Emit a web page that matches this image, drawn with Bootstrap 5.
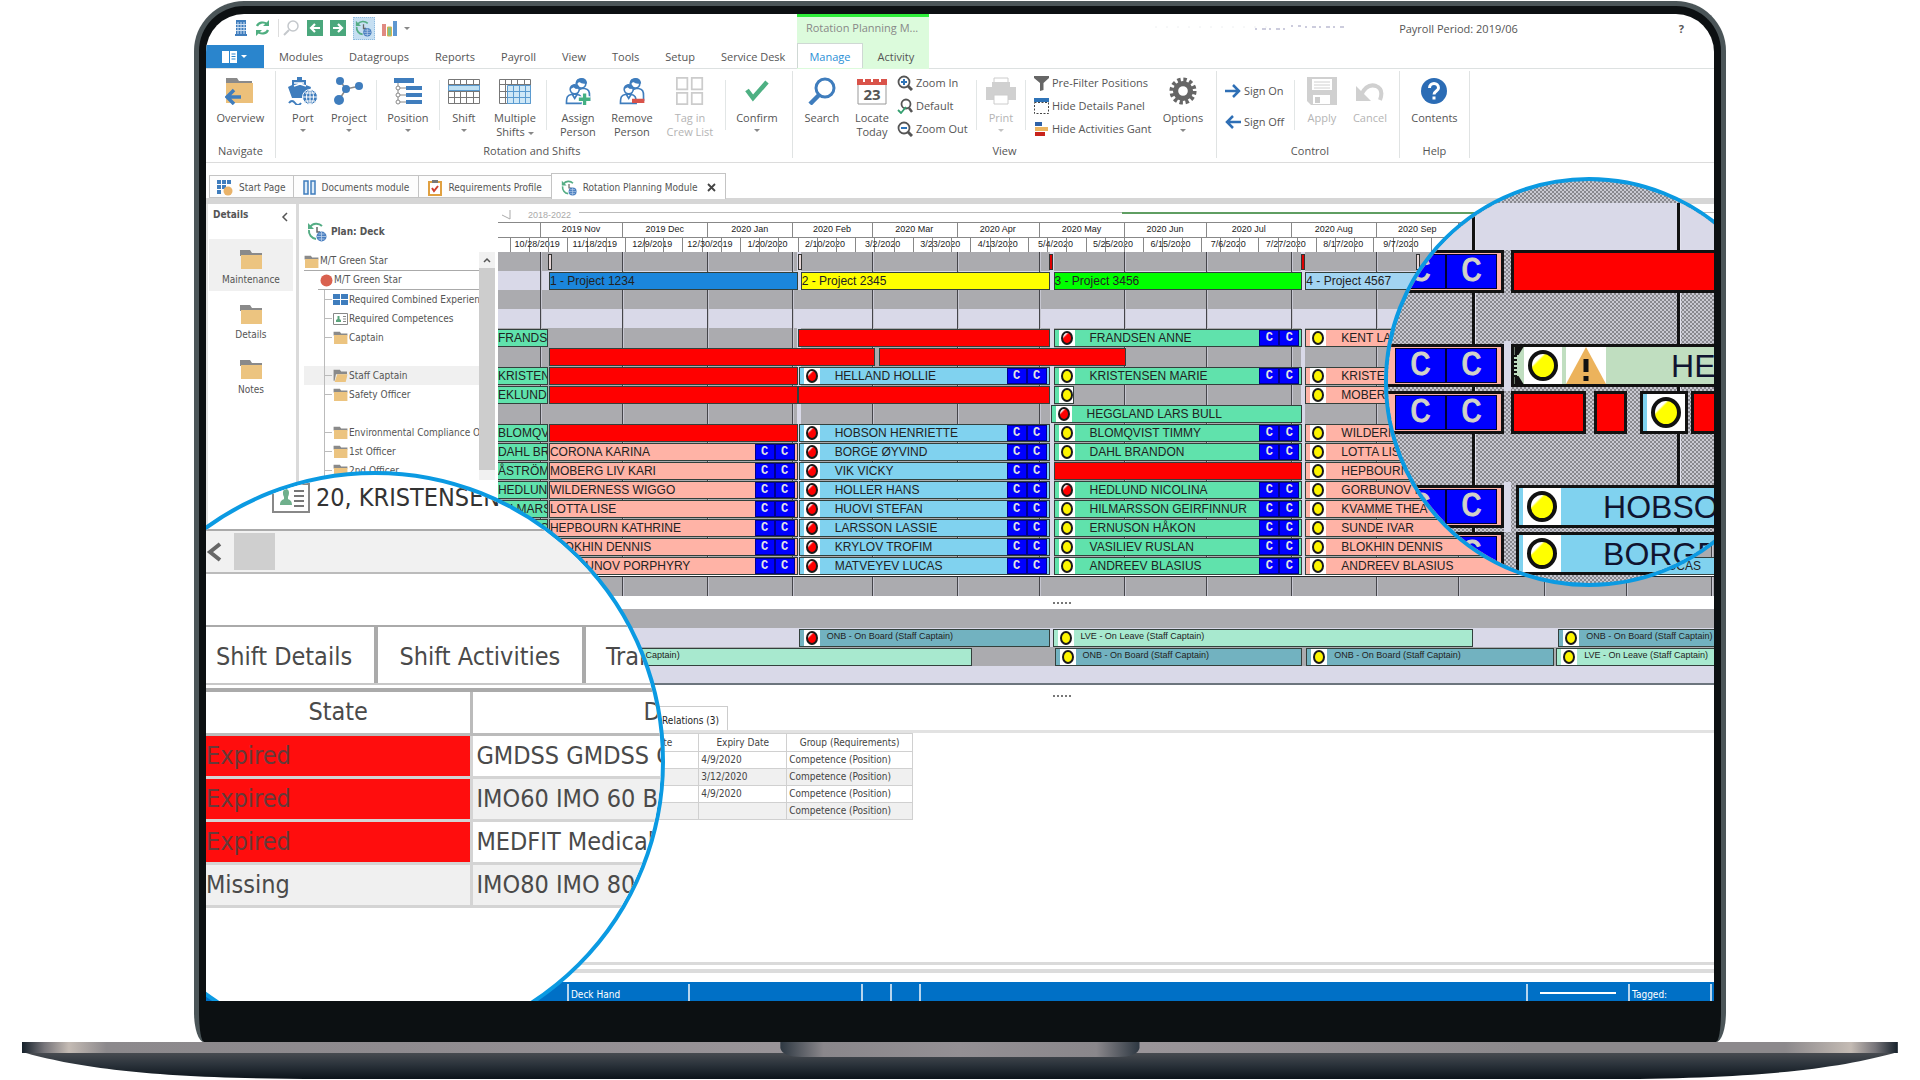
<!DOCTYPE html>
<html lang="en">
<head>
<meta charset="utf-8">
<meta name="viewport" content="width=device-width, initial-scale=1">
<title>Rotation Planning Module</title>
<link rel="stylesheet" href="https://cdn.jsdelivr.net/npm/bootstrap@5.3.0/dist/css/bootstrap.min.css">
<style>
:root{--ui:"Open Sans","Noto Sans",sans-serif;--dense:"DejaVu Sans Condensed","DejaVu Sans",sans-serif;--plot:"Liberation Sans",Arial,sans-serif;--rim:#0b9ae2;--ink:#555}
body{margin:0;background:#fff;color:var(--ink);font:11px/14px var(--ui);height:100vh;min-height:1080px;overflow-x:hidden}
button,a{font:inherit;color:inherit;text-decoration:none}
button{background:none;border:0;padding:0}
svg{display:block;flex:none}
/* laptop */
.lid{width:79.8%;margin:1px auto 0;border:5px solid #4b5558;border-bottom:0;border-radius:50px 50px 10px 10px/50px 50px 30px 30px;background:#0c1012;padding:8px 7px 0}
.chin{height:41px}
.screen{background:#fff;border-radius:38px 38px 0 0}
.deck-base{width:97.7%;height:38px}
/* header */
.quick{height:31px;padding:0 0 3px 29px;gap:7px}
.quick-on{width:22px;height:23px;background:#c6dff2;border:1px dotted #8ebbe0}
.head-left{width:591px}
.menu{height:23px}
.menu button{padding:0 13px;white-space:nowrap}
.menu .file-btn{flex:none;width:58px;height:23px;background:#2a85cd;color:#fff;margin-right:2px}
.menu .caret{border-top-color:#fff}
.ctx{width:132px;background:#dcfbdc;border-top:3px solid #2eee3a}
.ctx-title{height:26px;padding:4px 9px;color:#888;white-space:nowrap;overflow:hidden}
.ctx button{width:66px;height:25px;padding-top:2px;border:0}
.ctx .on{background:#fff;color:#2a90d6;border:1px solid #cfd8d4;border-bottom:0}
.head-line{border-bottom:1px solid #dde1e1}
/* ribbon */
.ribbon{height:94px;border-bottom:1px solid #dcdcdc;white-space:nowrap}
.grp{border-right:1px solid #e0e3e3;margin:2px 0 4px}
.grp-name{height:20px;padding-top:4px;text-align:center}
.grp-body{height:69px}
.rb{display:flex;flex-direction:column;align-items:center;padding-top:4px;line-height:14px}
.rb svg{margin:2px 0 6px;height:28px}
.rb-off{color:#b4b4b4}
.caret{width:0;border:3px solid transparent;border-top-color:#888;border-bottom:0;margin:4px auto 0}
.caret-in{display:inline-block;vertical-align:middle;margin:0 0 0 3px}
.vr-s{width:1px;background:#e2e6e6;margin:9px 4px 10px}
.mini{display:flex;align-items:center;gap:3px;height:23px}
.w40{width:40px}.w46{width:46px}.w50{width:50px}.w54{width:54px}.w58{width:58px}.w62{width:62px}
.w70{width:70px}.w75{width:75px}.w124{width:124px}.w65{width:65px}
/* document tabs */
.docs{height:25px;padding:10px 0 0 3px;border-bottom:6px solid #d6d6d6;box-sizing:content-box;font:10px/14px var(--dense)}
.docs button{display:flex;align-items:center;gap:6px;height:23px;margin-top:2px;border:1px solid #c4c4c4;margin-right:-1px;padding:2px 9px 0;white-space:nowrap;background:#fdfdfd}
.docs button:first-child{padding:2px 7px 0}
.docs .on{height:26px;margin-top:0;border-bottom:0;background:#fff}
/* workspace */
.dense{font:10px/14px var(--dense)}
.side{width:90px;border-left:2px solid #e4e4e4}
.side-head{height:35px;padding:4px 8px 0 5px}
.side button{display:flex;flex-direction:column;align-items:center;width:84px;height:52px;margin:0 0 3px 1px;padding-top:10px;gap:4px}
.side .on{background:#f0f0f0}
.tree-pane{width:202px;border-left:3px solid #dadada;padding-left:5px}
.plan-name{height:48px;padding:2px 0 0 3px}
.tree{width:175px;overflow:hidden;margin:0;padding:0;list-style:none;white-space:nowrap}
.tree li{height:19px;display:flex;align-items:center}
.tree a{display:flex;align-items:center;gap:1px}
.lv1{border-bottom:1px solid #aaa}
.lv2{margin-left:14px;border-bottom:1px solid #aaa;padding-left:2px}
.lv3{margin-left:20px;border-left:1px solid #bbb}
.lv3 a::before{content:"";width:7px;border-top:1px solid #bbb}
.lv3.picked{background:#f0f0f0;box-shadow:-20px 0 0 #f0f0f0}
.rail{width:16px;background:#f1f1f1}
.rail-btn{height:16px;background:#f1f1f1}
.rail-thumb{height:202px;background:#cdcdcd}
/* chart */
.chart{font:12px/16px var(--plot);color:#222;min-width:0}
.band-head{height:19px;border-bottom:1px solid #888;padding-top:3px}
.scale{position:relative;font-size:9px;line-height:12px;overflow:hidden;background:#fff}
.months{height:15px;border-bottom:1px solid #888}
.weeks{height:14px}
.scale span,.scale i{position:absolute;top:0;bottom:0}
.scale i{border-left:1px solid #888}
.scale span{transform:translateX(-50%);white-space:nowrap}
.plot{position:relative;overflow:hidden}
.lane{position:relative;height:19px;background:#ababaf}
.lane.lav{background:#d9d9e8}
.mline{position:absolute;top:0;bottom:0;width:2px;background:#45454a;border-right:1px solid #c6c6d0}
.split{position:absolute;top:0;bottom:0;width:4px;background:#d9d9e8}
.shift{position:absolute;top:1px;height:18px;border:1px solid #33403c;display:flex;align-items:center;overflow:hidden;white-space:nowrap;padding-right:2px}
.c-g{background:#60e2ac}.c-r{background:#f00}.c-s{background:#ffb3a6}.c-b{background:#80d2ef}
.c-p1{background:#1b86dc}.c-p2{background:#ff0}.c-p3{background:#0f0}.c-p4{background:#a2d4f2}
.c-onb{background:#72b2c0}.c-lve{background:#a8e9cf}
.lamp-box{width:16px;height:16px;background:#fff;margin-left:4px;flex:none;display:flex;justify-content:center;align-items:center}
.lamp{width:12px;height:14px;border:2px solid #1a1a1a;border-radius:50%}
.lamp-r{background:linear-gradient(135deg,#fff 20%,#f00 35%)}
.lamp-y{background:#fdf500}
.who{margin-left:15px}
.codes{margin-left:auto;display:flex;flex:none}
.codes b{width:20px;height:16px;background:#00f;color:#e4e4e4;border:1px solid #00008c;text-align:center;font:bold 12px/14px "Liberation Mono",monospace}
.flag{position:absolute;top:2px;height:16px;width:4px;border:1px solid #333;background:#e8d8d8}
.flag.hot{background:#d00}
.grip{height:13px;display:flex;justify-content:center;align-items:center;background:#fff}
.grip::before{content:"";width:18px;height:2px;background:repeating-linear-gradient(90deg,#777 0 2px,#fff 2px 4px);margin-right:88px}
.acts .shift{font-size:9px;line-height:10px}
.acts .who{margin-left:7px;margin-top:-4px}
.rel-tab{height:24px;width:230px;border:1px solid #ccc;border-left:0;border-bottom:0;text-align:right;padding:7px 8px 0 0}
.rel-line{height:3px;background:#e2e2e2}
.rel{width:415px;border-collapse:collapse;color:#444}
.rel td,.rel th{border:1px solid #d0d0d0;height:17px;padding:0 2px;font-weight:400;line-height:14px}
.rel th{text-align:center;height:18px}
.rel tr:nth-child(even) td{background:#f0f0f0}
/* bottom */
.floor{border-top:3px solid #dadada;border-bottom:4px solid #dcdcdc;height:11px;margin-bottom:9px}
.status{height:19px;background:#0070c6;color:#fff;padding-left:361px;line-height:22px}
.status span{border-left:2px solid #b6d5ee;padding-left:2px;margin-top:2px;height:17px;overflow:hidden}
.s120{width:121px}.s173{width:173px}.s29{width:29px}.s102{width:102px}.s82{width:82px}
/* magnifiers */
.lens{position:absolute;border:4px solid var(--rim);border-radius:50%;overflow:hidden;background:#fff}
.lens-l{width:580px;height:580px;left:-121px;top:457px;font:25px/34px var(--dense);color:#4a4a4a}
.lens-l .inner{padding-left:117px;white-space:nowrap}
.lens-top{height:54px;padding:0 0 8px 66px;color:#333;gap:6px}
.lens-scroll{height:45px;border-top:2px solid #aaa;border-bottom:2px solid #bbb;background:#f1f1f1;gap:12px;padding:2px 0}
.lens-thumb{width:41px;height:37px;background:#cfcfcf}
.lens-tabs{margin-top:51px;height:60px;border-top:2px solid #aaa;border-bottom:2px solid #c8c8c8}
.lens-tabs button{flex:none;border-right:4px solid #aaa;padding:4px 20px 0;text-align:left}
.lens-tabs button:first-child{padding-left:10px;width:172px}
.lens-tabs button:nth-child(2){width:208px}
.lens-tbl{border-collapse:collapse;width:460px;border-top:4px solid #aaa;margin-top:3px;table-layout:fixed}
.lens-tbl th,.lens-tbl td{border:3px solid #d4d4d4;border-left:0;padding:0 3px;height:43px;overflow:hidden;font-weight:400;line-height:34px}
.lens-tbl th{border-color:#bbb;text-align:center;height:44px}
.lens-tbl td:first-child{padding-left:0}
.lens-tbl .late{background:#ff0d0d;color:#663a3a}
.lens-tbl .alt{background:#f0f0f0}
.lens-r{width:410px;height:410px;right:-80px;top:163px;font:32px/40px var(--plot);color:#101430}
.mesh{background:repeating-conic-gradient(#88888e 0 25%,#c9c9d2 0 50%) 0 0/4px 4px}
.z{position:relative;height:47px}
.z.lav{background:#d9d9e8}
.z-line{position:absolute;top:22px;bottom:0;width:4px;background:#111;border-right:1px solid #e2e2ee}
.z-bar{position:absolute;top:0;height:43px;border:3px solid #111;display:flex;align-items:center;overflow:hidden;white-space:nowrap}
.z-codes b{width:51px;height:35px;background:#00f;border:1px solid #003;color:#d2d2c8;text-align:center;font:400 35px/34px "Liberation Mono",monospace;-webkit-text-stroke:1px #d2d2c8}
.z-codes{justify-content:flex-end;padding-right:4px}
.z-gap{position:absolute;top:-3px;height:50px;width:7px;background:#d9d9e8}
.z-lamp{width:38px;height:37px;background:#fff;flex:none;display:flex;justify-content:center;align-items:center}
.z-lamp::before{content:"";width:30px;height:31px;border:4px solid #111;border-radius:50%;background:linear-gradient(135deg,#fff 25%,#ff0 32%)}
</style>
<script src="https://cdn.jsdelivr.net/npm/bootstrap@5.3.0/dist/js/bootstrap.bundle.min.js"></script>
</head>
<body class="d-flex flex-column">
<svg width="0" height="0" class="position-absolute">
<defs>
<symbol id="folder" viewBox="0 0 22 20"><path fill="#8a8a8a" d="M0 1h10l2 3h10v3H0z"/><path fill="#ecc480" d="M1 6h21v14H1z"/></symbol>
<symbol id="folder-open" viewBox="0 0 22 20"><path fill="#8a8a8a" d="M0 1h10l2 3h9v4H4L2 18H0z"/><path fill="#ecc480" d="M6 8h16l-3 12H2z"/></symbol>
<symbol id="clockplan" viewBox="0 0 20 20"><path d="M3 5a8 8 0 0 1 12-1M2 8a8 8 0 0 0 7 9" fill="none" stroke="#55ad85" stroke-width="2"/><path fill="#55ad85" d="M1 1v6h6z"/><path d="M10 5v5h3" stroke="#666" stroke-width="1.5" fill="none"/><circle cx="14.5" cy="14.5" r="5" fill="#4a7fc0"/><path d="M10 14.500h9M14.500 10v9M11.500 12h6M11.500 17h6" stroke="#bcd2ec" stroke-width=".8"/></symbol>
<symbol id="people" viewBox="0 0 32 34"><g fill="#fff" stroke="#3f7dbd" stroke-width="2"><path d="M15 21c0-5 2-6 6-7h3c5 1 6 3 6 9v5H16z"/><circle cx="20" cy="8" r="5.500"/><path d="M14 7c1-6 11-7 12 0-4 1-7-1-8-2z" fill="#3f7dbd"/><path d="M2 32c0-8 1-10 7-11h5c6 1 7 3 7 11z"/><circle cx="12" cy="15" r="5.500"/><path d="M7 14c1-6 9-6 10 0-3 0-5 0-6-2z" fill="#3f7dbd" stroke-width="1"/><path d="M9 21l3 5 3-5" fill="none"/></g></symbol>
</defs>
</svg>

<main class="lid d-flex flex-column flex-fill">
<div class="screen position-relative overflow-hidden d-flex flex-column flex-fill">

<header class="d-flex">
 <div class="head-left flex-shrink-0 head-line">
  <div class="quick d-flex align-items-center">
   <svg width="12" height="16" viewBox="0 0 12 16"><path fill="#3f7dbd" d="M1 0h10v14h1v2H0v-2h1z"/><path stroke="#cfe0f2" d="M3 2v12M6 2v12M9 2v12M1 4.500h10M1 7.500h10M1 10.500h10" stroke-width="1"/></svg>
   <svg width="17" height="16" viewBox="0 0 17 16"><g fill="none" stroke="#4fae80" stroke-width="2.200"><path d="M3 6a6 5 0 0 1 10-2M14 10a6 5 0 0 1-10 2"/></g><path fill="#4fae80" d="M15 0v6H9zM2 16v-6h6z"/></svg>
   <svg width="22" height="18" viewBox="0 0 22 18"><path d="M.500 0v18" stroke="#ddd"/><circle cx="15" cy="7" r="5" fill="none" stroke="#c4c8cc" stroke-width="1.500"/><path d="M11 11l-5 5" stroke="#c4c8cc" stroke-width="2"/></svg>
   <svg width="16" height="16" viewBox="0 0 16 16"><rect width="16" height="16" fill="#4aa77c"/><path d="M13 8H4M8 4L4 8l4 4" fill="none" stroke="#fff" stroke-width="2.200"/></svg>
   <svg width="16" height="16" viewBox="0 0 16 16"><rect width="16" height="16" fill="#4aa77c"/><path d="M3 8h9M8 4l4 4-4 4" fill="none" stroke="#fff" stroke-width="2.200"/></svg>
   <span class="quick-on d-flex align-items-center justify-content-center"><svg width="17" height="17"><use href="#clockplan"/></svg></span>
   <svg width="15" height="17" viewBox="0 0 15 17"><path fill="#e08a82" d="M0 4h4v12H0z"/><path fill="#7fc08a" stroke="#d8b34e" d="M5.500 7h4v9h-4z"/><path fill="#5f97d0" d="M11 1h4v15h-4z"/></svg>
   <i class="caret m-0"></i>
  </div>
  <nav class="menu d-flex align-items-stretch">
   <button class="file-btn d-flex align-items-center justify-content-center gap-1" aria-label="File"><svg width="15" height="12" viewBox="0 0 15 12"><path fill="#fff" d="M0 0h7v12H0zM8 0h7v12H8z"/><path stroke="#2a85cd" d="M9.500 3h4M9.500 5.500h4M9.500 8h4"/></svg><i class="caret m-0"></i></button>
   <button>Modules</button><button>Datagroups</button><button>Reports</button><button>Payroll</button><button>View</button><button>Tools</button><button>Setup</button><button>Service Desk</button>
  </nav>
 </div>
 <div class="ctx flex-shrink-0">
  <div class="ctx-title">Rotation Planning M...</div>
  <div class="d-flex"><button class="on">Manage</button><button>Activity</button></div>
 </div>
 <div class="flex-fill head-line d-flex justify-content-end align-items-start pt-2">
  <svg class="me-4" width="230" height="10" viewBox="0 0 230 10"><path d="M10 5h120" stroke="#eef0f2" stroke-dasharray="2 9"/><path d="M110 7h30M146 4h10M160 5h40" stroke="#ccd" stroke-width="2" stroke-dasharray="2 5 4 3"/></svg>
  <span style="margin-right:161px">Payroll Period: 2019/06</span>
  <button class="fw-bold" style="margin-right:30px">?</button>
 </div>
</header>

<section class="ribbon d-flex">
 <div class="grp w70"><div class="grp-body d-flex">
  <button class="rb w70"><svg width="30" height="28" viewBox="0 0 30 28"><path fill="#8a8a8a" d="M1 1h11l2 3h13v4H1z"/><path fill="#ecc07a" d="M1 6h27v20H1z"/><path d="M16 20H2M9 13l-7 7 7 7" fill="none" stroke="#3f7dbd" stroke-width="3.500"/></svg>Overview</button>
 </div><div class="grp-name">Navigate</div></div>

 <div class="grp ps-1 pe-2"><div class="grp-body d-flex">
  <button class="rb w46"><svg width="30" height="28" viewBox="0 0 30 28"><path fill="#3f7dbd" d="M9 0h5v3h4v5l5 2-3 11H4L0 10l4-2V3h5z"/><path d="M6 6h10M6 9l6-2 6 2" stroke="#fff" fill="none" stroke-width="1.500"/><path d="M1 26q3-4 6 0t6 0" fill="none" stroke="#3f7dbd" stroke-width="2"/><circle cx="22" cy="20" r="7.500" fill="#3f7dbd" stroke="#fff"/><path d="M15 20h14M22 13v14M17 16h10M17 24h10" stroke="#fff"/><ellipse cx="22" cy="20" rx="3.500" ry="7" fill="none" stroke="#fff"/></svg>Port<i class="caret"></i></button>
  <button class="rb w46"><svg width="30" height="28" viewBox="0 0 30 28"><path d="M6 4l6 8 14-3M12 12L5 23" stroke="#888" stroke-width="1.500" fill="none"/><g fill="#3f7dbd"><circle cx="6" cy="4" r="4"/><circle cx="12" cy="12" r="4"/><circle cx="25" cy="9" r="4"/><circle cx="5" cy="23" r="5"/></g></svg>Project<i class="caret"></i></button>
  <i class="vr-s"></i>
  <button class="rb w54"><svg width="28" height="28" viewBox="0 0 28 28"><g fill="#3f7dbd"><path d="M0 1h20v5H0zM12 9h16v4H12zM12 16h16v4H12zM12 23h16v4H12z"/></g><path d="M4 6v19M4 11h8M4 18h8M4 25h8" stroke="#888" fill="none"/><g fill="#fff" stroke="#888"><circle cx="4" cy="11" r="2"/><circle cx="4" cy="18" r="2"/><circle cx="4" cy="25" r="2"/></g></svg>Position<i class="caret"></i></button>
  <i class="vr-s"></i>
  <button class="rb w40"><svg width="32" height="28" viewBox="0 0 32 28"><path fill="#fff" stroke="#777" d="M.500 2.500h31v24H.500zM.500 7.500h31M.500 14.500h31M.500 20.500h31M6.500 2v24M12.500 2v24M18.500 2v24M25.500 2v24"/><path fill="#bfe0f3" stroke="#5b9bd0" d="M.500 8.500h31v5H.500z"/></svg>Shift<i class="caret"></i></button>
  <button class="rb w62"><svg width="32" height="28" viewBox="0 0 32 28"><path fill="#fff" stroke="#777" d="M.500 2.500h31v24H.500zM.500 7.500h31M.500 14.500h31M.500 20.500h31M6.500 2v24M12.500 2v24M18.500 2v24M25.500 2v24"/><path fill="#cfe8f7" stroke="#5b9bd0" d="M8.500 8.500h23v18h-23zM8 14.500h23M8 20.500h23M14.500 8v18M20.500 8v18M26.500 8v18"/></svg>Multiple<br><span>Shifts<i class="caret caret-in"></i></span></button>
  <i class="vr-s ms-0"></i>
  <button class="rb w54"><svg width="32" height="28" viewBox="0 0 32 34"><use href="#people" width="32" height="34"/><path d="M24 20v14M17 27h14" stroke="#fff" stroke-width="7"/><path d="M24 20v14M17 27h14" stroke="#44b083" stroke-width="4"/></svg>Assign<br>Person</button>
  <button class="rb w54"><svg width="32" height="28" viewBox="0 0 32 34"><use href="#people" width="32" height="34"/><path d="M16 29h15" stroke="#d9534a" stroke-width="5"/></svg>Remove<br>Person</button>
  <button class="rb rb-off w62" disabled><svg width="32" height="28" viewBox="0 0 32 32"><path fill="#fff" stroke="#ccc" stroke-width="2" d="M1 1h12v13H1zM18 1h12v13H18zM1 18h12v13H1zM18 18h12v13H18z"/></svg>Tag in<br>Crew List</button>
  <i class="vr-s"></i>
  <button class="rb w54"><svg width="26" height="28" viewBox="0 0 26 28"><path d="M3 13l6 8L23 5" fill="none" stroke="#4eb083" stroke-width="4.500"/></svg>Confirm<i class="caret"></i></button>
 </div><div class="grp-name">Rotation and Shifts</div></div>

 <div class="grp px-1"><div class="grp-body d-flex">
  <button class="rb w50"><svg width="28" height="28" viewBox="0 0 28 28"><circle cx="17" cy="11" r="9" fill="none" stroke="#3f7dbd" stroke-width="3"/><path d="M11 18l-9 9" stroke="#3f7dbd" stroke-width="4.500"/></svg>Search</button>
  <button class="rb w50"><svg width="30" height="28" viewBox="0 0 30 28"><path fill="#fff" stroke="#999" d="M1 4h28v23H1z"/><path fill="#d9534a" d="M0 2h30v6H0z"/><path d="M7 0v5M15 0v5M23 0v5" stroke="#fff" stroke-width="2"/><text x="15" y="23" font-size="15" font-weight="700" text-anchor="middle" fill="#555">23</text></svg>Locate<br>Today</button>
  <div class="w75">
   <button class="mini"><svg width="16" height="16" viewBox="0 0 16 16"><circle cx="7" cy="7" r="5.500" fill="#fff" stroke="#555" stroke-width="1.800"/><path d="M11 11l4 4" stroke="#555" stroke-width="3"/><path d="M4 7h6M7 4v6" stroke="#2f74b8" stroke-width="2"/></svg>Zoom In</button>
   <button class="mini"><svg width="16" height="16" viewBox="0 0 16 16"><circle cx="9" cy="6" r="4.500" fill="#fff" stroke="#555" stroke-width="1.800"/><path d="M12 10l3 4" stroke="#555" stroke-width="2.500"/><path d="M1 12l3 3 5-6" fill="none" stroke="#35a070" stroke-width="1.800"/></svg>Default</button>
   <button class="mini"><svg width="16" height="16" viewBox="0 0 16 16"><circle cx="7" cy="7" r="5.500" fill="#fff" stroke="#555" stroke-width="1.800"/><path d="M11 11l4 4" stroke="#555" stroke-width="3"/><path d="M4 7h6" stroke="#2f74b8" stroke-width="2"/></svg>Zoom Out</button>
  </div>
  <i class="vr-s"></i>
  <button class="rb rb-off w40" disabled><svg width="30" height="28" viewBox="0 0 30 28"><path fill="#fff" stroke="#ccc" d="M8 1h14v10H8z"/><path fill="#d0d0d0" d="M0 10h30v13H0zM6 5h18v8H6z"/><path fill="#fff" stroke="#ccc" d="M8 18h14v9H8z"/></svg>Print<i class="caret opacity-50"></i></button>
  <i class="vr-s"></i>
  <div class="w124 ps-1">
   <button class="mini"><svg width="15" height="16" viewBox="0 0 15 16"><path fill="#666" d="M0 1h15v2L9.500 8v7L6 16V8L0 3z"/></svg>Pre-Filter Positions</button>
   <button class="mini"><svg width="15" height="16" viewBox="0 0 15 16"><path fill="#2f74b8" d="M0 0h15v4H0z"/><path fill="none" stroke="#444" stroke-dasharray="2 1.500" d="M.500 4.500h14v11H.500z"/></svg>Hide Details Panel</button>
   <button class="mini"><svg width="15" height="16" viewBox="0 0 15 16"><path fill="#2f62a8" d="M1 1h7v4H1z"/><path fill="#ecb560" d="M1 6h13v4H1z"/><path fill="#c8231c" d="M1 11h10v4H1z"/></svg>Hide Activities Gant</button>
  </div>
  <button class="rb w58"><svg width="30" height="28" viewBox="-16 -16 32 32"><circle r="8.500" fill="none" stroke="#666" stroke-width="6"/><circle r="13" fill="none" stroke="#666" stroke-width="5" stroke-dasharray="3.800 3.007"/></svg>Options<i class="caret"></i></button>
 </div><div class="grp-name">View</div></div>

 <div class="grp ps-2 pe-1"><div class="grp-body d-flex">
  <div class="w65 pt-2">
   <button class="mini mb-2"><svg width="16" height="14" viewBox="0 0 16 14"><path d="M0 7h14M8 1l6 6-6 6" fill="none" stroke="#2f6fb5" stroke-width="2.500"/></svg>Sign On</button>
   <button class="mini"><svg width="16" height="14" viewBox="0 0 16 14"><path d="M16 7H2M8 1L2 7l6 6" fill="none" stroke="#2f6fb5" stroke-width="2.500"/></svg>Sign Off</button>
  </div>
  <i class="vr-s"></i>
  <button class="rb rb-off w46" disabled><svg width="30" height="28" viewBox="0 0 30 28"><path fill="#d0d0d0" d="M0 0h30v28H4l-4-4z"/><path fill="#fff" d="M5 2h20v11H5zM6 18h17v9H6z"/><path stroke="#d0d0d0" d="M7 5h16M7 8h16M7 11h16"/><path fill="#ccc" d="M8 20h5v6H8z"/></svg>Apply</button>
  <button class="rb rb-off w50" disabled><svg width="30" height="28" viewBox="0 0 30 28"><path fill="#d0d0d0" d="M1 9v15h15z"/><path d="M6 18c4-8 9-11 15-9 5 2 7 6 4 14" fill="none" stroke="#d0d0d0" stroke-width="4"/></svg>Cancel</button>
 </div><div class="grp-name">Control</div></div>

 <div class="grp w70"><div class="grp-body d-flex">
  <button class="rb w70"><svg width="28" height="28" viewBox="0 0 28 28"><circle cx="14" cy="14" r="13" fill="#2b6cb5"/><path d="M9.500 11c0-6 9-6 9 0 0 3-4.500 3-4.500 6.500M14 19.500v3" fill="none" stroke="#fff" stroke-width="3"/></svg>Contents</button>
 </div><div class="grp-name">Help</div></div>
</section>

<nav class="docs d-flex align-items-start">
 <button><svg width="16" height="16" viewBox="0 0 16 16"><path fill="#3f7dbd" d="M0 0h4v4H0zM5 0h4v4H5zM10 0h4v4h-4zM0 5h4v4H0zM5 5h4v4H5zM0 10h4v4H0z"/><circle cx="11" cy="11" r="4.500" fill="#e9b36a"/></svg>Start Page</button>
 <button><svg width="13" height="15" viewBox="0 0 13 15"><path fill="#dcebf8" stroke="#3f7dbd" stroke-width="1.500" d="M1 1h4v13H1zM8 1h4v13H8z"/></svg>Documents module</button>
 <button><svg width="14" height="16" viewBox="0 0 14 16"><path fill="#fff" stroke="#e0a040" stroke-width="2" d="M1 2h12v13H1z"/><path fill="#777" d="M4 0h6v3H4z"/><path d="M4 8l2 3 4-5" fill="none" stroke="#d04030" stroke-width="2"/></svg>Requirements Profile</button>
 <button class="on"><svg width="16" height="16"><use href="#clockplan"/></svg>Rotation Planning Module<svg class="ms-1" width="9" height="9" viewBox="0 0 9 9"><path d="M1 1l7 7M8 1L1 8" stroke="#444" stroke-width="1.800"/></svg></button>
</nav>

<div class="d-flex flex-fill" style="min-height:0">
 <aside class="side dense flex-shrink-0">
  <div class="side-head d-flex justify-content-between"><b>Details</b><svg width="7" height="10" viewBox="0 0 7 10" class="mt-1"><path d="M6 1L2 5l4 4" fill="none" stroke="#555" stroke-width="1.500"/></svg></div>
  <button class="on"><svg width="22" height="20"><use href="#folder"/></svg>Maintenance</button>
  <button><svg width="22" height="20"><use href="#folder"/></svg>Details</button>
  <button><svg width="22" height="20"><use href="#folder"/></svg>Notes</button>
 </aside>

 <section class="tree-pane dense flex-shrink-0">
  <div class="plan-name d-flex align-items-center gap-1 pt-3"><svg width="20" height="20" class="mb-2"><use href="#clockplan"/></svg><b class="mb-2">Plan: Deck</b></div>
  <div class="d-flex">
   <ul class="tree" id="tree"></ul>
   <div class="rail"><div class="rail-btn d-flex justify-content-center align-items-center"><svg width="8" height="6" viewBox="0 0 8 6"><path d="M1 5l3-3 3 3" fill="none" stroke="#555" stroke-width="1.500"/></svg></div><div class="rail-thumb"></div></div>
  </div>
 </section>

 <section class="chart flex-fill">
  <div class="band-head d-flex align-items-center gap-2 ps-1"><svg width="10" height="10" viewBox="0 0 10 10"><path d="M0 5l8 4V0" fill="none" stroke="#aaa"/></svg><span class="ms-2" style="color:#aaa;font-size:9px">2018-2022</span><div class="flex-fill d-flex mb-1"><div style="flex:542;border-top:1px solid #bbb"></div><div style="flex:355;border-top:2px solid #5f9e62"></div><div style="flex:236;border-top:1px solid #bbb"></div></div></div>
  <div class="scale months" id="months"></div>
  <div class="scale weeks" id="weeks"></div>
  <div class="plot" id="plot"></div>
  <div class="grip"></div>
  <div class="plot acts" id="acts"></div>
  <div class="grip mt-1"></div>
  <div class="dense mt-1">
   <div class="rel-tab">Relations (3)</div>
   <div class="rel-line"></div>
   <table class="rel">
    <colgroup><col style="width:201px"><col style="width:88px"><col style="width:126px"></colgroup>
    <thead><tr><th class="text-end" style="padding-right:26px">Issue Date</th><th>Expiry Date</th><th>Group (Requirements)</th></tr></thead>
    <tbody>
     <tr><td></td><td>4/9/2020</td><td>Competence (Position)</td></tr>
     <tr><td></td><td>3/12/2020</td><td>Competence (Position)</td></tr>
     <tr><td></td><td>4/9/2020</td><td>Competence (Position)</td></tr>
     <tr><td></td><td></td><td>Competence (Position)</td></tr>
    </tbody>
   </table>
  </div>
 </section>
</div>

<div class="floor"></div>
<footer class="status dense d-flex">
 <span class="s120">Deck Hand</span><span class="s173"></span><span class="s29"></span><span class="s29"></span><span class="flex-fill"></span><span class="s102 pt-2 px-2"><i class="d-block mx-1 border-top border-2 border-white"></i></span><span class="s82">Tagged:</span><span></span>
</footer>

<div class="lens lens-l">
 <div class="inner">
  <div class="lens-top d-flex align-items-center"><svg width="38" height="30" viewBox="0 0 38 30"><path fill="#fff" stroke="#888" stroke-width="2" d="M1 1h36v28H1z"/><path fill="#6fb08c" d="M8 22c0-4 2-5 4-6v-2c-2-4-1-8 2-8s4 4 2 8v2c2 1 4 2 4 6z"/><path stroke="#777" stroke-width="2" d="M22 8h10M22 13h10M22 18h10M22 23h10"/></svg><span>20, KRISTENSEN MARIE</span></div>
  <div class="lens-scroll d-flex align-items-center"><svg width="16" height="20" viewBox="0 0 16 20"><path d="M14 2L4 10l10 8" fill="none" stroke="#666" stroke-width="4"/></svg><div class="lens-thumb"></div></div>
  <div class="lens-tabs d-flex"><button>Shift Details</button><button class="px-2 text-center">Shift Activities</button><button class="border-0">Training</button></div>
  <table class="lens-tbl">
   <colgroup><col style="width:266px"><col></colgroup>
   <thead><tr><th>State</th><th style="text-align:left;padding-left:170px">Description</th></tr></thead>
   <tbody>
    <tr><td class="late">Expired</td><td>GMDSS GMDSS Certificate</td></tr>
    <tr><td class="late">Expired</td><td class="alt">IMO60 IMO 60 Basic</td></tr>
    <tr><td class="late">Expired</td><td>MEDFIT Medical Fitness</td></tr>
    <tr><td class="alt">Missing</td><td class="alt">IMO80 IMO 80 Security</td></tr>
   </tbody>
  </table>
 </div>
</div>
<div class="lens lens-r mesh" id="zoomed"></div>

</div>
<div class="chin flex-shrink-0"></div>
</main>

<svg class="deck-base mx-auto" viewBox="0 0 1875 38" preserveAspectRatio="none">
 <defs>
  <linearGradient id="under" x2="0" y2="1"><stop offset="0" stop-color="#4a4d52"/><stop offset=".45" stop-color="#2c343c"/><stop offset="1" stop-color="#0c131a"/></linearGradient>
  <linearGradient id="edge"><stop offset="0" stop-color="#15202a"/><stop offset=".012" stop-color="#77757a"/><stop offset=".025" stop-color="#c4bbb4"/><stop offset=".045" stop-color="#8c898c"/><stop offset=".2" stop-color="#8f8b8f"/><stop offset=".42" stop-color="#9a9599"/><stop offset=".6" stop-color="#9a9599"/><stop offset=".8" stop-color="#8c898c"/><stop offset=".94" stop-color="#8c898c"/><stop offset=".975" stop-color="#c4bbb4"/><stop offset=".988" stop-color="#77757a"/><stop offset="1" stop-color="#15202a"/></linearGradient>
  <linearGradient id="notch"><stop offset="0" stop-color="#2e3842"/><stop offset=".12" stop-color="#8a878b"/><stop offset=".5" stop-color="#949094"/><stop offset=".88" stop-color="#8a878b"/><stop offset="1" stop-color="#2e3842"/></linearGradient>
 </defs>
 <path fill="url(#under)" d="M0 10C60 27 140 37 300 37h1275c160 0 240-10 300-27z"/>
 <path fill="url(#edge)" d="M0 0h1875v11H0z"/>
 <path fill="url(#notch)" d="M758 0h359v6q-2 9-22 9H780q-20 0-22-9z"/>
</svg>

<script>
// Chart positions are counted in units of 1/1217 of the visible period.
const SPAN = 1217, DAY = 2.744, NOV1 = 42;
const pct = u => (u / SPAN * 100).toFixed(3) + '%';

const tree = [['lv1','folder','M/T Green Star'],['lv2','dot','M/T Green Star'],['lv3','grid','Required Combined Experience'],['lv3','id','Required Competences'],['lv3','folder','Captain'],['lv3',''],['lv3 picked','folder-open','Staff Captain'],['lv3','folder','Safety Officer'],['lv3',''],['lv3','folder','Environmental Compliance Officer'],['lv3','folder','1st Officer'],['lv3','folder','2nd Officer']];
const art = {
 dot:'<svg width="13" height="13" viewBox="0 0 13 13"><circle cx="6.500" cy="6.500" r="6" fill="#d9614f"/></svg>',
 grid:'<svg width="15" height="11" viewBox="0 0 15 11"><path fill="#3f7dbd" d="M0 0h7v5H0zM8 0h7v5H8zM0 6h7v5H0zM8 6h7v5H8z"/></svg>',
 id:'<svg width="15" height="12" viewBox="0 0 15 12"><path fill="#fff" stroke="#888" d="M.500.500h14v11H.500z"/><path fill="#5aa57c" d="M3 9h5V7L6.500 6V3h-2v3L3 7z"/><path stroke="#888" d="M10 3.500h3M10 6h3M10 8.500h3"/></svg>'
};
document.getElementById('tree').innerHTML = tree.map(([c,i,t]) => `<li class="${c}">${t ? `<a href="#">${art[i] || `<svg width="15" height="13" viewBox="0 0 22 20"><use href="#${i}"/></svg>`}${t}</a>` : ''}</li>`).join('');

const months = [['2019 Nov',30],['2019 Dec',31],['2020 Jan',31],['2020 Feb',29],['2020 Mar',31],['2020 Apr',30],['2020 May',31],['2020 Jun',30],['2020 Jul',31],['2020 Aug',31],['2020 Sep',30],['2020 Oct',31],['2020 Nov',30],['2020 Dec',31],['2021 Jan',31]];
let at = NOV1, lines = '', head = '';
for (const [name, days] of months) {
 head += `<i style="left:${pct(at)}"></i>` + (at < 900 ? `<span style="left:${pct(at + days * DAY / 2)}">${name}</span>` : '');
 lines += `<div class="mline" style="left:${pct(at)}"></div>`;
 at += days * DAY;
}
document.getElementById('months').innerHTML = head;

let weeks = '', day = new Date(Date.UTC(2019, 9, 28));
for (let x = NOV1 - 4 * DAY - 7 * DAY, n = -1; x < SPAN; x += 7 * DAY, n++) {
 weeks += `<i style="left:${pct(x)}"></i>`;
 if (n >= 0 && n % 3 === 0 && x < 920) {
  weeks += `<span style="left:${pct(x + 3 * DAY)}">${day.getUTCMonth() + 1}/${day.getUTCDate()}/${day.getUTCFullYear()}</span>`;
  day.setUTCDate(day.getUTCDate() + 21);
 }
}
document.getElementById('weeks').innerHTML = weeks;

const codes = '<span class="codes"><b>C</b><b>C</b></span>';
function shift(kind, a, b, text = '', lamp = '', coded = false) {
 const light = lamp ? `<span class="lamp-box"><span class="lamp lamp-${lamp}"></span></span>` : '';
 return `<div class="shift c-${kind}" style="left:${pct(a)};width:${pct(b - a)}">${light}${text ? `<span class="${lamp ? 'who' : ''}">${text}</span>` : ''}${coded ? codes : ''}</div>`;
}
const A = t => shift('g', -1, 50, t), B = t => shift('s', 51, 300, t, '', true), BR = shift('r', 51, 300);
const C = t => shift('b', 301, 552, t, 'r', true), D = (t, l = 'y') => shift('g', 556, 805, t, l, true);
const E = t => shift('s', 808, 1057, t, 'y'), F = t => shift('b', 1060, 1230, t, 'y');
const flag = (u, hot) => `<div class="flag ${hot ? 'hot' : ''}" style="left:${pct(u)}"></div>`;
const splits = [299, 552, 804, 1056].map(u => `<div class="split" style="left:${pct(u)}"></div>`).join('');
const lanes = [
 ['', flag(50) + flag(300) + flag(551, 1) + flag(804, 1) + flag(919)],
 ['lav', shift('p1', 51, 300, '1 - Project 1234') + shift('p2', 303, 552, '2 - Project 2345') + shift('p3', 556, 805, '3 - Project 3456') + shift('p4', 808, 1057, '4 - Project 4567')],
 ['', ''], ['lav', ''],
 ['', A('FRANDSEN') + shift('r', 300, 552) + D('FRANDSEN ANNE', 'r') + E('KENT LARS')],
 ['', shift('r', 51, 377) + shift('r', 381, 629)],
 ['', A('KRISTENSEN') + BR + C('HELLAND HOLLIE') + D('KRISTENSEN MARIE') + E('KRISTENSEN MARIE')],
 ['', A('EKLUND') + BR + shift('r', 300, 552) + shift('g', 556, 576, '', 'y') + E('MOBERG LIV')],
 ['', shift('g', 553, 805, 'HEGGLAND LARS BULL', 'r')],
 ['', A('BLOMQVIST') + BR + C('HOBSON HENRIETTE') + D('BLOMQVIST TIMMY') + E('WILDERNESS WIGGO')],
 ['', A('DAHL BRANDON') + B('CORONA KARINA') + C('BORGE ØYVIND') + D('DAHL BRANDON') + E('LOTTA LISE')],
 ['', A('ÅSTRÖM') + B('MOBERG LIV KARI') + C('VIK VICKY') + shift('r', 556, 805) + E('HEPBOURN KATHRINE')],
 ['', A('HEDLUND') + B('WILDERNESS WIGGO') + C('HOLLER HANS') + D('HEDLUND NICOLINA', 'r') + E('GORBUNOV PORPHYRY')],
 ['', A('HILMARSSON') + B('LOTTA LISE') + C('HUOVI STEFAN') + D('HILMARSSON GEIRFINNUR') + E('KVAMME THEA')],
 ['', A('ERNUSON') + B('HEPBOURN KATHRINE') + C('LARSSON LASSIE') + D('ERNUSON HÅKON') + E('SUNDE IVAR')],
 ['', A('VASILIEV') + B('BLOKHIN DENNIS') + C('KRYLOV TROFIM') + D('VASILIEV RUSLAN') + E('BLOKHIN DENNIS')],
 ['', A('ANDREEV') + B('GORBUNOV PORPHYRY') + C('MATVEYEV LUCAS') + D('ANDREEV BLASIUS') + E('ANDREEV BLASIUS') + F('MATVEYEV LUCAS')]
];
document.getElementById('plot').innerHTML = lanes.map(([c, h]) => `<div class="lane ${c}">${lines}${c || !h ? '' : splits}${h}</div>`).join('') +
 `<div class="border-top border-dark border-1" style="margin-top:1px"></div><div class="lane">${lines}</div>`;

document.getElementById('acts').innerHTML =
 '<div class="lane"></div>' +
 '<div class="lane lav">' + shift('onb', 301, 552, 'ONB - On Board (Staff Captain)', 'r') + shift('lve', 555, 976, 'LVE - On Leave (Staff Captain)', 'y') + shift('onb', 1061, 1240, 'ONB - On Board (Staff Captain)', 'y') + '</div>' +
 '<div class="lane">' + shift('lve', 30, 474, 'LVE - On Leave (Staff Captain)', 'y') + shift('onb', 557, 805, 'ONB - On Board (Staff Captain)', 'y') + shift('onb', 809, 1057, 'ONB - On Board (Staff Captain)', 'y') + shift('lve', 1059, 1240, 'LVE - On Leave (Staff Captain)', 'y') + '</div>' +
 '<div class="lane lav border-bottom border-2 border-secondary"></div>';

// Magnified part of the chart, in pixels of the lens.
const zb = (a, b, color, inner = '', cls = '') => `<div class="z-bar ${cls}" style="left:${a}px;width:${b - a}px;background:${color}">${inner}</div>`;
const zc = zb(-10, 116, '#ffb3a6', '<b>C</b><b>C</b>', 'z-codes'), gap = '<div class="z-gap" style="left:116px"></div>', lampZ = '<span class="z-lamp"></span>';
const warn = '<span class="bg-white ms-1"><svg width="40" height="37" viewBox="0 0 40 37"><path fill="#ecb35c" d="M20 0l20 37H0z"/><path stroke="#111" stroke-width="5" d="M20 12v13M20 29v5"/></svg></span>';
const handle = '<svg width="10" height="37" viewBox="0 0 9 37"><path fill="#111" d="M0 0h9L4 8H0zM0 37h9l-5-8H0z"/><path d="M1 8v22" stroke="#111" stroke-width="3" stroke-dasharray="2 2"/></svg>';
document.getElementById('zoomed').innerHTML =
 '<div style="height:22px"></div><div class="z lav"></div>' +
 '<div class="z-line" style="left:84px"></div><div class="z-line" style="left:289px"></div>' +
 `<div class="z">${zc}${zb(123, 420, '#f00')}</div><div class="z"></div>` +
 `<div class="z">${gap}${zc}${zb(123, 420, '#c0dec0', handle + lampZ + warn + '<span style="margin-left:65px">HELLAND</span>')}</div>` +
 `<div class="z">${zc}${zb(123, 198, '#f00')}${zb(206, 239, '#f00')}${zb(252, 300, '#80d2ef', '<span class="ms-1"></span>' + lampZ)}${zb(303, 420, '#f00')}</div><div class="z"></div>` +
 `<div class="z">${gap}${zc}${zb(128, 420, '#80d2ef', '<span class="ms-1"></span>' + lampZ + '<span style="margin-left:42px">HOBSON</span>')}</div>` +
 `<div class="z">${zc}${zb(128, 420, '#80d2ef', '<span class="ms-1"></span>' + lampZ + '<span style="margin-left:42px">BORGE</span>')}</div>`;
</script>
</body>
</html>
